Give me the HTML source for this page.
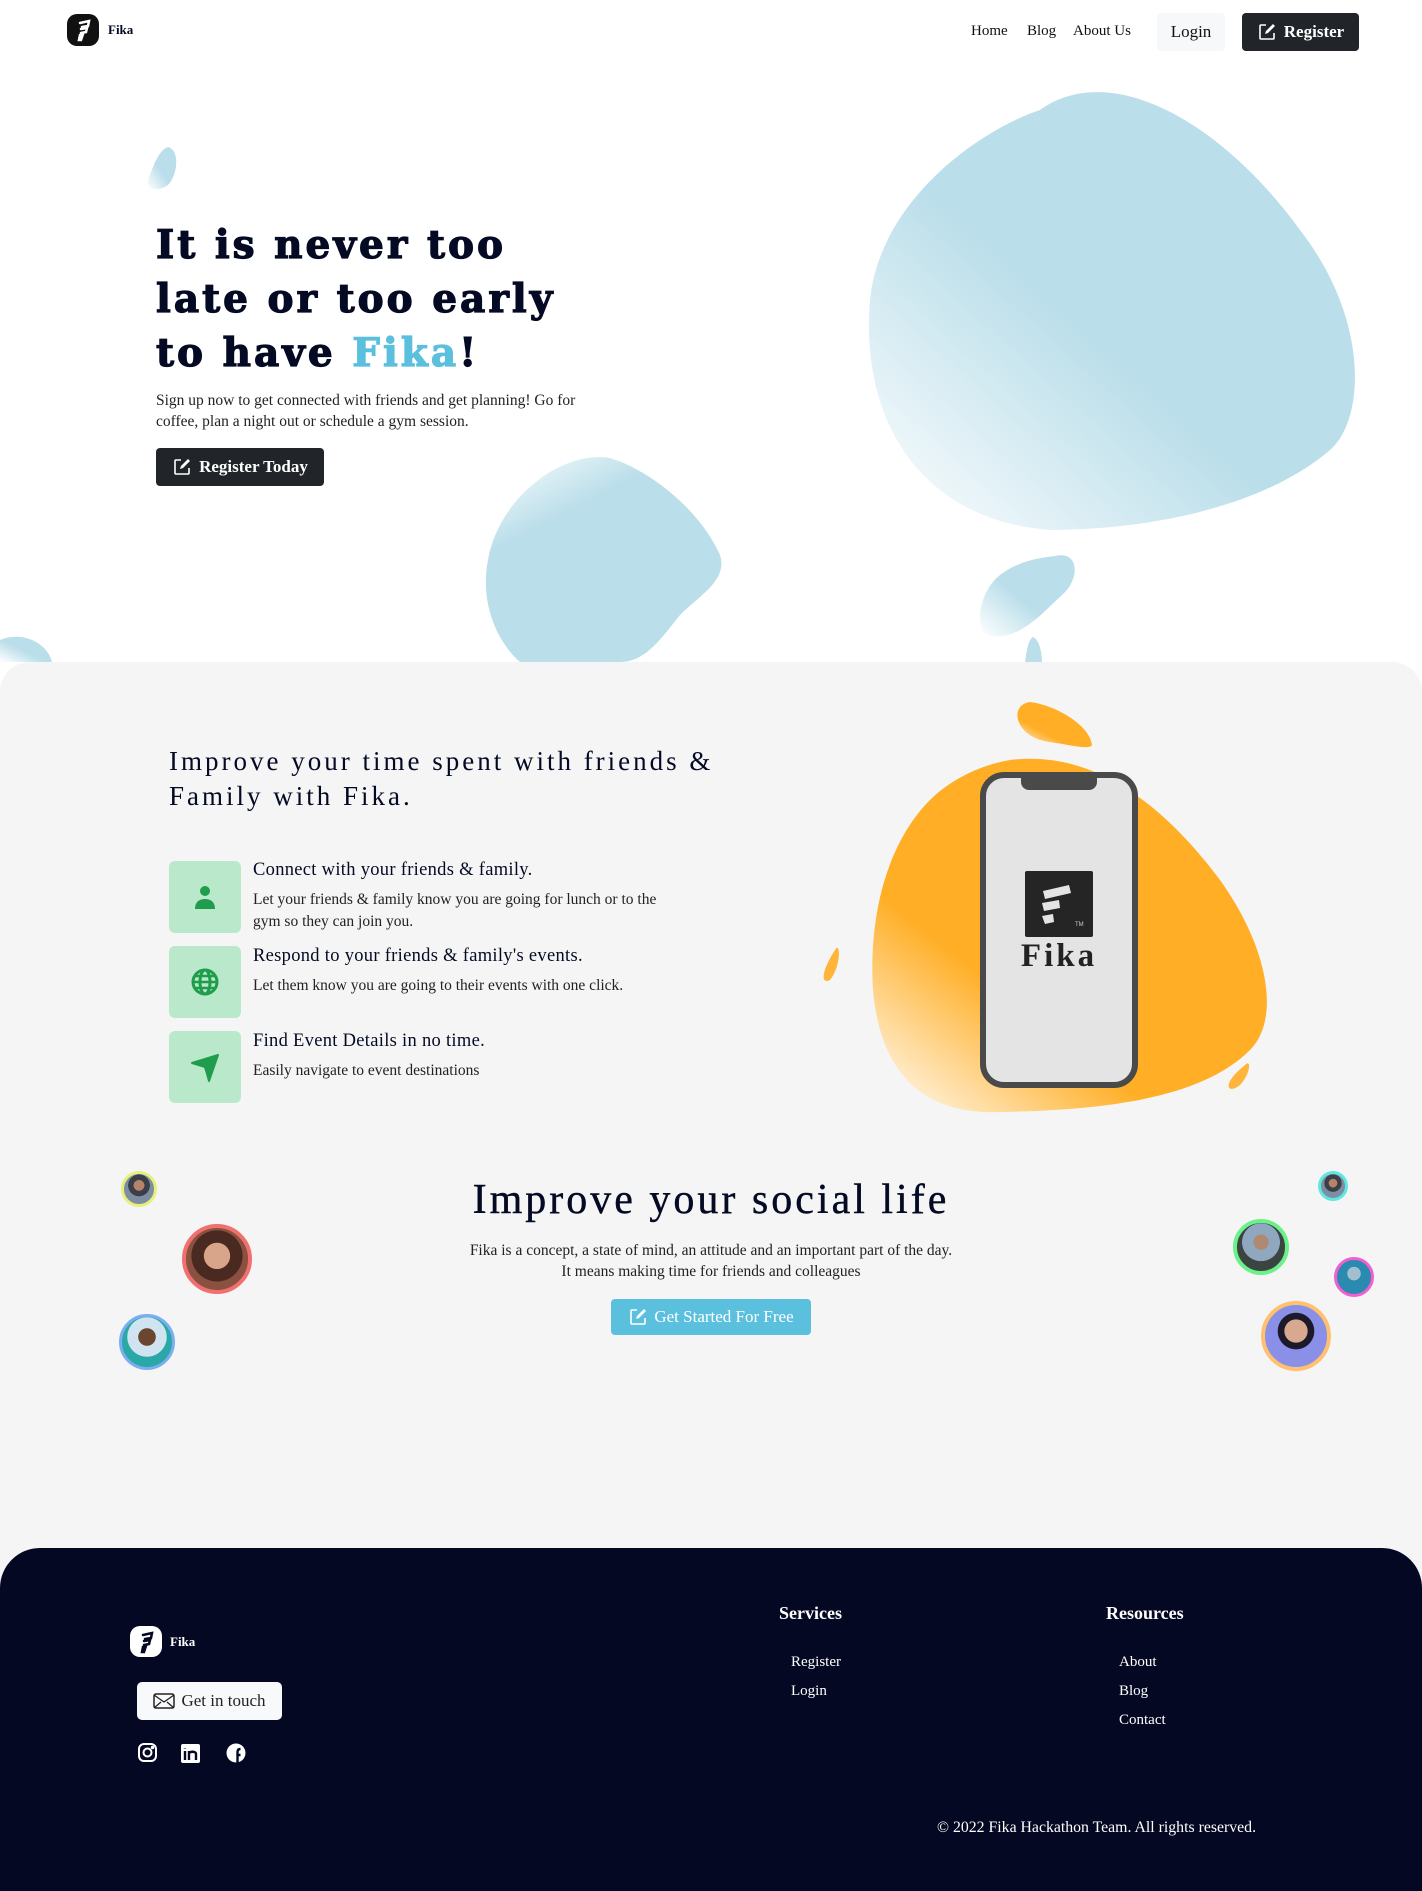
<!DOCTYPE html>
<html><head><meta charset="utf-8">
<style>
*{margin:0;padding:0;box-sizing:border-box}
body{width:1422px;height:1891px;overflow:hidden;background:#fff;font-family:"Liberation Serif",serif;color:#050a24;position:relative}
.abs{position:absolute}
.nav a{position:absolute;font-size:15px;color:#111;text-decoration:none;top:23px}
.btn{position:absolute;border-radius:4px;display:flex;align-items:center;justify-content:center;font-weight:bold}
h1{position:absolute;left:156px;top:218px;font-size:39px;line-height:54px;font-weight:900;letter-spacing:3px;-webkit-text-stroke:1.2px #050a24;color:#050a24;font-family:"DejaVu Serif",serif}
h1 span{color:#5bbfde;-webkit-text-stroke:1.2px #5bbfde}
.feat{position:absolute;left:169px;width:72px;height:72px;background:#b9e9ca;border-radius:6px;display:flex;align-items:center;justify-content:center}
.ft{position:absolute;left:253px;font-size:18.5px;color:#050a24;letter-spacing:0.3px}
.fd{position:absolute;left:253px;font-size:15.5px;line-height:22px;color:#222}
.av{position:absolute;border-radius:50%;border-style:solid;background:radial-gradient(circle at 50% 38%,#b58368 0 22%,#3a3f4a 23% 45%,#7d8ea3 46%)}
.fl{position:absolute;color:#fff;font-size:15px}
</style></head><body>
<svg class="abs" style="left:0;top:0" width="1422" height="662">
<defs>
<linearGradient id="bg1" x1="0" y1="1" x2="1" y2="0"><stop offset="0" stop-color="#fff"/><stop offset="0.45" stop-color="#badeea"/><stop offset="1" stop-color="#badeea"/></linearGradient>
<linearGradient id="bg2" x1="0" y1="0" x2="0.6" y2="1"><stop offset="0" stop-color="#fff"/><stop offset="0.35" stop-color="#badeea"/></linearGradient>
</defs>
<path d="M1040 110 C1110 60 1220 120 1300 230 C1370 320 1365 420 1330 450 C1260 510 1140 530 1050 530 C920 520 860 420 870 300 C880 200 980 130 1040 110Z" fill="url(#bg1)"/>
<path d="M610 458 C650 470 700 510 720 555 C728 580 700 595 680 615 C660 640 645 662 620 662 L520 662 C495 640 480 600 488 560 C498 500 560 450 610 458Z" fill="url(#bg2)"/>
<path d="M1055 556 C1080 550 1080 580 1062 595 C1040 615 1020 640 990 636 C972 630 980 590 1000 575 C1020 560 1040 558 1055 556Z" fill="url(#bg1)"/>
<path d="M1033 637 C1040 640 1042 655 1042 662 L1025 662 C1027 650 1028 640 1033 637Z" fill="#badeea"/>
<path d="M0 640 C25 630 48 645 52 662 L0 662Z" fill="url(#bg1)"/>
<path d="M168 147 C180 150 178 175 168 185 C158 192 145 190 148 180 C152 170 158 150 168 147Z" fill="url(#bg1)"/>
</svg>
<div class="abs" style="left:67px;top:14px;width:32px;height:32px;background:#111;border-radius:10px"></div>
<svg class="abs" style="left:67px;top:14px" width="32" height="32"><path d="M13 9 L22 7 L21 12 L15 13 M14 15 L20 14 L19 18 L14 19 M13 21 L16 20 L14 26 L12 26Z" stroke="#fff" stroke-width="2.5" fill="none" stroke-linecap="round"/></svg>
<div class="abs" style="left:108px;top:22px;font-size:13px;font-weight:bold">Fika</div>
<div class="nav"><a style="left:971px">Home</a><a style="left:1027px">Blog</a><a style="left:1073px">About Us</a></div>
<div class="btn" style="left:1157px;top:13px;width:68px;height:38px;background:#f7f8f9;font-weight:normal;font-size:17px;color:#111">Login</div>
<div class="btn" style="left:1242px;top:13px;width:117px;height:38px;background:#212529;color:#fff;font-size:17px"><svg width="20" height="20" viewBox="0 0 20 20" style="margin-right:7px"><path d="M9 3H4a1 1 0 0 0-1 1v12a1 1 0 0 0 1 1h12a1 1 0 0 0 1-1v-5" stroke="#fff" stroke-width="1.6" fill="none"/><path d="M8 12l1-3 7-7 2 2-7 7z" fill="#fff"/></svg>Register</div>
<h1>It is never too<br>late or too early<br>to have <span>Fika</span>!</h1>
<p class="abs" style="left:156px;top:390px;width:448px;font-size:15.5px;line-height:21px;color:#222">Sign up now to get connected with friends and get planning! Go for coffee, plan a night out or schedule a gym session.</p>
<div class="btn" style="left:156px;top:448px;width:168px;height:38px;background:#212529;color:#fff;font-size:17px"><svg width="20" height="20" viewBox="0 0 20 20" style="margin-right:7px"><path d="M9 3H4a1 1 0 0 0-1 1v12a1 1 0 0 0 1 1h12a1 1 0 0 0 1-1v-5" stroke="#fff" stroke-width="1.6" fill="none"/><path d="M8 12l1-3 7-7 2 2-7 7z" fill="#fff"/></svg>Register Today</div>
<div class="abs" style="left:0;top:662px;width:1422px;height:920px;background:#f5f5f5;border-radius:30px 30px 0 0"></div>
<div class="abs" style="left:169px;top:744px;font-size:27px;line-height:35px;letter-spacing:3px">Improve your time spent with friends &amp;<br>Family with Fika.</div>
<div class="feat" style="top:861px"><svg width="30" height="30" viewBox="0 0 30 30"><circle cx="15" cy="9" r="5" fill="#1f9d4d"/><path d="M5 27c0-7 4-10 10-10s10 3 10 10z" fill="#1f9d4d"/></svg></div>
<div class="ft" style="top:860px">Connect with your friends &amp; family.</div>
<div class="fd" style="top:889px;width:428px">Let your friends &amp; family know you are going for lunch or to the gym so they can join you.</div>
<div class="feat" style="top:946px"><svg width="30" height="30" viewBox="0 0 30 30" fill="none" stroke="#1f9d4d" stroke-width="3"><circle cx="15" cy="15" r="12"/><ellipse cx="15" cy="15" rx="5" ry="12"/><path d="M3 15h24M5 9h20M5 21h20" stroke-width="2.5"/></svg></div>
<div class="ft" style="top:946px">Respond to your friends &amp; family's events.</div>
<div class="fd" style="top:975px">Let them know you are going to their events with one click.</div>
<div class="feat" style="top:1031px"><svg width="32" height="32" viewBox="0 0 32 32"><path d="M3 12 L29 4 L20 30 L16 16Z" fill="#1f9d4d" stroke="#1f9d4d" stroke-width="2" stroke-linejoin="round"/></svg></div>
<div class="ft" style="top:1031px">Find Event Details in no time.</div>
<div class="fd" style="top:1060px">Easily navigate to event destinations</div>
<svg class="abs" style="left:800px;top:690px" width="500" height="440">
<defs><linearGradient id="og" x1="0" y1="1" x2="0.7" y2="0.2"><stop offset="0" stop-color="#fff"/><stop offset="0.45" stop-color="#ffae25"/><stop offset="1" stop-color="#ffae25"/></linearGradient></defs>
<path d="M210 70 C290 60 360 110 420 190 C470 260 480 330 450 360 C400 410 300 420 200 422 C120 425 80 380 73 300 C68 220 90 150 130 110 C150 90 180 75 210 70Z" fill="url(#og)"/>
<path d="M230 12 C255 15 290 35 292 55 C290 60 270 55 250 52 C215 48 208 15 230 12Z" fill="url(#og)"/>
<path d="M35 260 C40 250 42 275 30 290 C20 295 22 280 35 260Z" fill="#ffb43a"/>
<path d="M445 375 C452 368 450 385 440 395 C428 405 420 395 445 375Z" fill="#ffb43a"/>
</svg>
<div class="abs" style="left:980px;top:772px;width:158px;height:316px;border:6px solid #4a4a4a;border-radius:24px;background:#e4e4e4"></div>
<div class="abs" style="left:1021px;top:776px;width:76px;height:14px;background:#4a4a4a;border-radius:0 0 8px 8px"></div>
<div class="abs" style="left:1025px;top:871px;width:68px;height:66px;background:#252525;border-radius:2px"></div>
<svg class="abs" style="left:1025px;top:871px" width="68" height="66"><path d="M18 20 L44 14 L46 22 L20 28Z M17 32 L34 29 L35 37 L19 40Z M17 45 L28 43 L29 51 L20 53Z" fill="#e4e4e4"/><text x="50" y="55" font-size="6" fill="#ccc" font-family="Liberation Sans">TM</text></svg>
<div class="abs" style="left:1018px;top:938px;width:82px;text-align:center;font-size:33px;font-weight:bold;letter-spacing:3px;color:#222">Fika</div>
<div class="abs" style="left:0;top:1176px;width:1422px;text-align:center;font-size:42px;letter-spacing:3px;-webkit-text-stroke:0.4px #050a24">Improve your social life</div>
<div class="abs" style="left:0;top:1240px;width:1422px;text-align:center;font-size:15.5px;line-height:21px;color:#222">Fika is a concept, a state of mind, an attitude and an important part of the day.<br>It means making time for friends and colleagues</div>
<div class="btn" style="left:611px;top:1299px;width:200px;height:36px;background:#5bc0de;color:#fff;font-size:17px;font-weight:normal"><svg width="20" height="20" viewBox="0 0 20 20" style="margin-right:6px"><path d="M9 3H4a1 1 0 0 0-1 1v12a1 1 0 0 0 1 1h12a1 1 0 0 0 1-1v-5" stroke="#fff" stroke-width="1.6" fill="none"/><path d="M8 12l1-3 7-7 2 2-7 7z" fill="#fff"/></svg>Get Started For Free</div>
<div class="av" style="left:121px;top:1171px;width:36px;height:36px;border-width:3px;border-color:#e6f07a"></div>
<div class="av" style="left:182px;top:1224px;width:70px;height:70px;border-width:4px;border-color:#f07070;background:radial-gradient(circle at 50% 45%,#d9a58a 0 28%,#4a2a20 29% 55%,#8a5040 56%)"></div>
<div class="av" style="left:119px;top:1314px;width:56px;height:56px;border-width:3px;border-color:#7aaef0;background:radial-gradient(circle at 50% 40%,#6a4530 0 22%,#cfe4f0 23% 50%,#2aa8a8 51%)"></div>
<div class="av" style="left:1318px;top:1171px;width:30px;height:30px;border-width:3px;border-color:#5ee8e0"></div>
<div class="av" style="left:1233px;top:1219px;width:56px;height:56px;border-width:4px;border-color:#6cf08a;background:radial-gradient(circle at 50% 40%,#b08a70 0 20%,#8fa8c0 21% 50%,#3a4440 51%)"></div>
<div class="av" style="left:1334px;top:1257px;width:40px;height:40px;border-width:3px;border-color:#f060d0;background:radial-gradient(circle at 50% 40%,#a0c0d0 0 25%,#2a8ab0 26%)"></div>
<div class="av" style="left:1261px;top:1301px;width:70px;height:70px;border-width:4px;border-color:#ffc070;background:radial-gradient(circle at 50% 42%,#d8a890 0 24%,#1a1a2a 25% 38%,#8a90e8 39%)"></div>
<div class="abs" style="left:0;top:1548px;width:1422px;height:343px;background:#040822;border-radius:40px 40px 0 0"></div>
<div class="abs" style="left:130px;top:1626px;width:32px;height:31px;background:#fff;border-radius:10px"></div>
<svg class="abs" style="left:130px;top:1626px" width="32" height="31"><path d="M13 9 L22 7 L21 12 L15 13 M14 15 L20 14 L19 18 L14 19 M13 21 L16 20 L14 26 L12 26Z" stroke="#040822" stroke-width="2.5" fill="none" stroke-linecap="round"/></svg>
<div class="abs" style="left:170px;top:1634px;font-size:13px;font-weight:bold;color:#fff">Fika</div>
<div class="btn" style="left:137px;top:1682px;width:145px;height:38px;background:#f8f9fa;color:#222;font-weight:normal;font-size:17px;border-radius:5px"><svg width="22" height="16" viewBox="0 0 22 16" style="margin-right:6px"><rect x="1" y="1" width="20" height="14" rx="2" fill="none" stroke="#222" stroke-width="1.5"/><path d="M1 2l10 7 10-7M1 15l7-6M21 15l-7-6" fill="none" stroke="#222" stroke-width="1.3"/></svg>Get in touch</div>
<svg class="abs" style="left:137px;top:1742px" width="120" height="22" fill="none" stroke="#fff" stroke-width="2">
<rect x="2" y="2" width="17" height="17" rx="5"/><circle cx="10.5" cy="10.5" r="4"/><circle cx="15.5" cy="5.5" r="0.8" fill="#fff"/>
<rect x="44" y="2" width="19" height="19" rx="2" fill="#fff" stroke="none"/><path d="M48 9v9M48 6v0.5M52 18v-9M52 12c0-3 7-3 7 0v6" stroke="#040822" stroke-width="2.4"/>
<circle cx="99" cy="11" r="9.5" fill="#fff" stroke="none"/><path d="M100.5 21v-8h3M100.5 13v-3c0-2 1-3 3-3" stroke="#040822" stroke-width="2.4"/>
</svg>
<div class="fl" style="left:779px;top:1603px;font-size:18px;font-weight:bold">Services</div>
<div class="fl" style="left:791px;top:1654px">Register</div>
<div class="fl" style="left:791px;top:1683px">Login</div>
<div class="fl" style="left:1106px;top:1603px;font-size:18px;font-weight:bold">Resources</div>
<div class="fl" style="left:1119px;top:1654px">About</div>
<div class="fl" style="left:1119px;top:1683px">Blog</div>
<div class="fl" style="left:1119px;top:1712px">Contact</div>
<div class="fl" style="left:937px;top:1819px;font-size:15.8px">© 2022 Fika Hackathon Team. All rights reserved.</div>
</body></html>
